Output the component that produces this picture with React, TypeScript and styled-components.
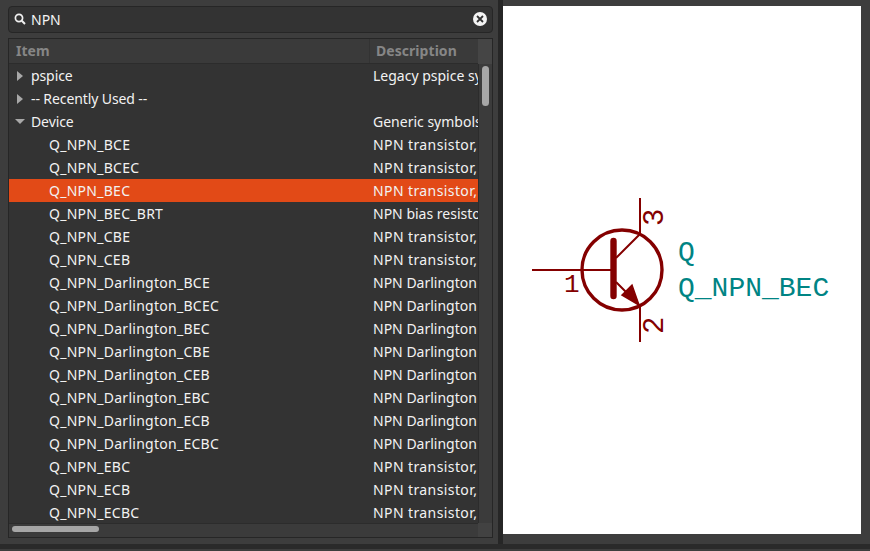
import { FC } from 'react';
import styled, { createGlobalStyle } from 'styled-components';

const GlobalStyle = createGlobalStyle`
  html, body {
    margin: 0;
    padding: 0;
    background: #3d3d3d;
    overflow: hidden;
  }
  body {
    font-family: "Noto Sans", "Open Sans", sans-serif;
  }
`;

const Page = styled.div`
  display: flex;
  flex-direction: column;
  width: 870px;
  height: 551px;
  background: #3d3d3d;
`;

const Main = styled.div`
  display: flex;
  height: 544px;
`;

const BottomBar = styled.div`
  height: 5px;
  background: #2a2a2a;
`;

const LeftPane = styled.div`
  display: flex;
  flex-direction: column;
  gap: 5px;
  box-sizing: border-box;
  width: 498px;
  padding: 6px 5px 6px 8px;
`;

const Sash = styled.div`
  width: 5px;
  background: #262626;
`;

const RightPane = styled.div`
  flex: 1;
  padding: 6px 9px 10px 0;
`;

const Canvas = styled.div`
  height: 100%;
  background: #ffffff;
`;

const SearchBox = styled.div`
  display: flex;
  align-items: center;
  box-sizing: border-box;
  height: 27px;
  padding: 0 5px 1px;
  gap: 5px;
  background: #333333;
  border: 1px solid #262626;
  border-radius: 4px;
  color: #f4f4f4;
  font-size: 14px;
`;

const SearchText = styled.span`
  flex: 1;
`;

const TreePanel = styled.div`
  display: grid;
  grid-template-columns: 1fr 14px;
  grid-template-rows: 25px 1fr 14px;
  flex: 1;
  min-height: 0;
  background: #333333;
  border: 1px solid #262626;
`;

const HeaderRow = styled.div`
  display: grid;
  grid-template-columns: 360px 1fr;
  background: #3a3a3a;
  border-bottom: 1px solid #2c2c2c;
  box-sizing: border-box;
`;

const HeaderCell = styled.div<{ $divider?: boolean }>`
  padding-left: ${(p) => (p.$divider ? '6px' : '7px')};
  line-height: 23px;
  color: #868686;
  font-size: 14px;
  font-weight: 700;
  letter-spacing: 0.05px;
  border-left: ${(p) => (p.$divider ? '1px solid #333333' : 'none')};
`;

const Corner = styled.div`
  background: #454545;
`;

const Rows = styled.div`
  overflow: hidden;
`;

const Row = styled.div<{ $selected?: boolean }>`
  display: grid;
  grid-template-columns: 360px 1fr;
  height: 23px;
  line-height: 23px;
  font-size: 14px;
  color: #f2f2f2;
  white-space: nowrap;
  background: ${(p) => (p.$selected ? '#e24a17' : 'transparent')};
`;

const NameCell = styled.div<{ $depth: number }>`
  display: flex;
  align-items: center;
  padding-left: ${(p) => (p.$depth === 0 ? '6px' : '40px')};
  gap: 5px;
  letter-spacing: ${(p) => (p.$depth === 0 ? '-0.1px' : '0.27px')};
  overflow: hidden;
`;

const DescCell = styled.div<{ $wide?: boolean }>`
  padding-left: 4px;
  letter-spacing: ${(p) => (p.$wide ? '0.4px' : '0')};
  overflow: hidden;
`;

const ExpanderBox = styled.span`
  display: inline-flex;
  justify-content: center;
  width: 10px;
  margin-right: 1px;
`;

const Collapsed = styled.span`
  border-style: solid;
  border-width: 5px 0 5px 6px;
  border-color: transparent transparent transparent #a8a8a8;
`;

const Expanded = styled.span`
  border-style: solid;
  border-width: 5px 5px 0 5px;
  border-color: #a8a8a8 transparent transparent transparent;
`;

const VScroll = styled.div`
  grid-column: 2;
  grid-row: 2;
  position: relative;
  background: #3b3b3b;
  border-left: 1px solid #2c2c2c;
`;

const VThumb = styled.div`
  position: absolute;
  top: 2px;
  left: 3px;
  width: 7px;
  height: 40px;
  border-radius: 4px;
  background: #a6a6a6;
`;

const HScroll = styled.div`
  grid-column: 1;
  grid-row: 3;
  position: relative;
  background: #3b3b3b;
  border-top: 1px solid #2c2c2c;
`;

const HThumb = styled.div`
  position: absolute;
  top: 2px;
  left: 3px;
  width: 87px;
  height: 6px;
  border-radius: 3px;
  background: #a6a6a6;
`;

const ScrollCorner = styled.div`
  grid-column: 2;
  grid-row: 3;
  background: #424242;
`;

interface TreeRow {
  name: string;
  desc: string;
  depth: number;
  state?: 'open' | 'closed';
  selected?: boolean;
}

const bjt = 'NPN transistor,';
const darl = 'NPN Darlington transistor';

const rows: TreeRow[] = [
  { name: 'pspice', desc: 'Legacy pspice symbols', depth: 0, state: 'closed' },
  { name: '-- Recently Used --', desc: '', depth: 0, state: 'closed' },
  { name: 'Device', desc: 'Generic symbols', depth: 0, state: 'open' },
  { name: 'Q_NPN_BCE', desc: bjt, depth: 1 },
  { name: 'Q_NPN_BCEC', desc: bjt, depth: 1 },
  { name: 'Q_NPN_BEC', desc: bjt, depth: 1, selected: true },
  { name: 'Q_NPN_BEC_BRT', desc: 'NPN bias resistor transistor', depth: 1 },
  { name: 'Q_NPN_CBE', desc: bjt, depth: 1 },
  { name: 'Q_NPN_CEB', desc: bjt, depth: 1 },
  { name: 'Q_NPN_Darlington_BCE', desc: darl, depth: 1 },
  { name: 'Q_NPN_Darlington_BCEC', desc: darl, depth: 1 },
  { name: 'Q_NPN_Darlington_BEC', desc: darl, depth: 1 },
  { name: 'Q_NPN_Darlington_CBE', desc: darl, depth: 1 },
  { name: 'Q_NPN_Darlington_CEB', desc: darl, depth: 1 },
  { name: 'Q_NPN_Darlington_EBC', desc: darl, depth: 1 },
  { name: 'Q_NPN_Darlington_ECB', desc: darl, depth: 1 },
  { name: 'Q_NPN_Darlington_ECBC', desc: darl, depth: 1 },
  { name: 'Q_NPN_EBC', desc: bjt, depth: 1 },
  { name: 'Q_NPN_ECB', desc: bjt, depth: 1 },
  { name: 'Q_NPN_ECBC', desc: bjt, depth: 1 },
];

const SearchIcon = () => (
  <svg width="12" height="12" viewBox="0 0 12 12">
    <circle cx="5" cy="5" r="3.6" fill="none" stroke="#f0f0f0" strokeWidth="1.7" />
    <path d="M7.8 7.8 L11 11" stroke="#f0f0f0" strokeWidth="2" />
  </svg>
);

const ClearIcon = () => (
  <svg width="14" height="14" viewBox="0 0 14 14">
    <circle cx="7" cy="7" r="7" fill="#f4f4f4" />
    <path d="M4 4 L10 10 M10 4 L4 10" stroke="#333333" strokeWidth="1.8" />
  </svg>
);

const SymbolText = styled.text`
  font-family: "Liberation Mono", monospace;
`;

// drawn in page coordinates, canvas starts at 503,6
const Symbol: FC = () => (
  <svg width="358" height="528" viewBox="503 6 358 528">
    <g stroke="#840000" fill="none">
      <circle cx="622" cy="270" r="40" strokeWidth="3.4" />
      <path d="M532 270 H612" strokeWidth="2" />
      <path d="M640 198 V234 L616 258" strokeWidth="2" />
      <path d="M616 282 L640 306 V342" strokeWidth="2" />
      <path d="M613.5 241 V296" strokeWidth="6.4" strokeLinecap="round" />
    </g>
    <path d="M639 305 L622 295 L632 285 Z" fill="#840000" stroke="#840000" strokeWidth="1.5" />
    <SymbolText x={564} y={292} fill="#840000" fontSize={26}>
      1
    </SymbolText>
    <SymbolText x={0} y={0} fill="#840000" fontSize={29} transform="translate(663 226) rotate(-90)">
      3
    </SymbolText>
    <SymbolText x={0} y={0} fill="#840000" fontSize={29} transform="translate(663 334) rotate(-90)">
      2
    </SymbolText>
    <SymbolText x={678} y={260} fill="#008484" fontSize={28}>
      Q
    </SymbolText>
    <SymbolText x={678} y={296} fill="#008484" fontSize={28}>
      Q_NPN_BEC
    </SymbolText>
  </svg>
);

const App: FC = () => (
  <Page>
    <GlobalStyle />
    <Main>
      <LeftPane>
        <SearchBox>
          <SearchIcon />
          <SearchText>NPN</SearchText>
          <ClearIcon />
        </SearchBox>
        <TreePanel>
          <HeaderRow>
            <HeaderCell>Item</HeaderCell>
            <HeaderCell $divider>Description</HeaderCell>
          </HeaderRow>
          <Corner />
          <Rows>
            {rows.map((row) => (
              <Row key={row.name} $selected={row.selected}>
                <NameCell $depth={row.depth}>
                  {row.state && (
                    <ExpanderBox>{row.state === 'open' ? <Expanded /> : <Collapsed />}</ExpanderBox>
                  )}
                  {row.name}
                </NameCell>
                <DescCell $wide={row.desc === bjt}>{row.desc}</DescCell>
              </Row>
            ))}
          </Rows>
          <VScroll>
            <VThumb />
          </VScroll>
          <HScroll>
            <HThumb />
          </HScroll>
          <ScrollCorner />
        </TreePanel>
      </LeftPane>
      <Sash />
      <RightPane>
        <Canvas>
          <Symbol />
        </Canvas>
      </RightPane>
    </Main>
    <BottomBar />
  </Page>
);

export default App;
